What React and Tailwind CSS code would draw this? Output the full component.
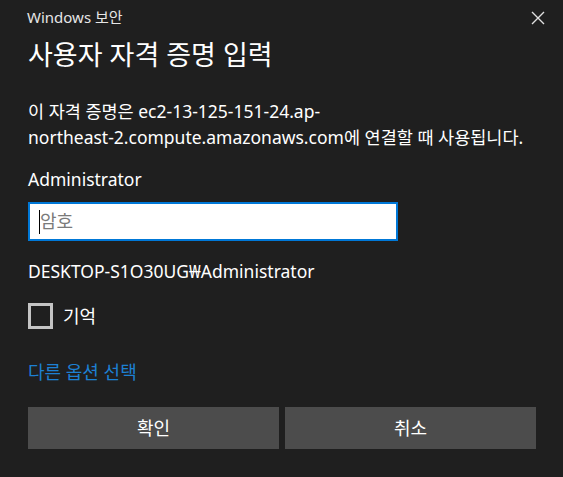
export default function App() {
  const font = { fontFamily: '"Noto Sans", "Noto Sans CJK KR", sans-serif' };
  return (
    <div className="w-[563px] h-[477px] bg-[#1f1f1f] text-white overflow-hidden" style={font}>
      <div className="flex items-start justify-between pl-[27px] pr-[18px] pt-[6px]">
        <span className="text-[15px] leading-[22px] text-[#e6e6e6]">Windows 보안</span>
        <svg className="mt-[5px]" width="14" height="14" viewBox="0 0 14 14">
          <path d="M1 1 L13 13 M13 1 L1 13" stroke="#e0e0e0" strokeWidth="1.4" />
        </svg>
      </div>
      <div className="pl-[28px]">
        <h1 className="mt-[10px] text-[27px] leading-[34px] font-normal">사용자 자격 증명 입력</h1>
        <p className="mt-[26px] text-[17.5px] leading-[26px] w-[520px]">
          이 자격 증명은 ec2-13-125-151-24.ap-
          <br />
          northeast-2.compute.amazonaws.com에 연결할 때 사용됩니다.
        </p>
        <div className="mt-[16px] text-[17.5px] leading-[26px]">Administrator</div>
        <div className="mt-[10px] w-[370px] h-[39px] bg-white border-2 border-[#0078d7] flex items-center pl-[9px]">
          <span className="w-px h-[24px] bg-black" />
          <span className="text-[18px] text-[#7a7a7a]">암호</span>
        </div>
        <div className="mt-[17px] text-[17.5px] leading-[26px]">DESKTOP-S1O30UG₩Administrator</div>
        <label className="mt-[19px] flex items-center gap-[10px]">
          <span className="w-[25px] h-[26px] border-[3px] border-[#c4c4c4] bg-[#1f1f1f]" />
          <span className="text-[18px] leading-[26px]">기억</span>
        </label>
        <div className="mt-[30px] text-[18px] leading-[26px] text-[#1d80d3]">다른 옵션 선택</div>
        <div className="mt-[22px] flex gap-[6px]">
          <button className="w-[251px] h-[42px] bg-[#4c4c4c] text-[18px] text-white">확인</button>
          <button className="w-[251px] h-[42px] bg-[#4c4c4c] text-[18px] text-white">취소</button>
        </div>
      </div>
    </div>
  );
}
